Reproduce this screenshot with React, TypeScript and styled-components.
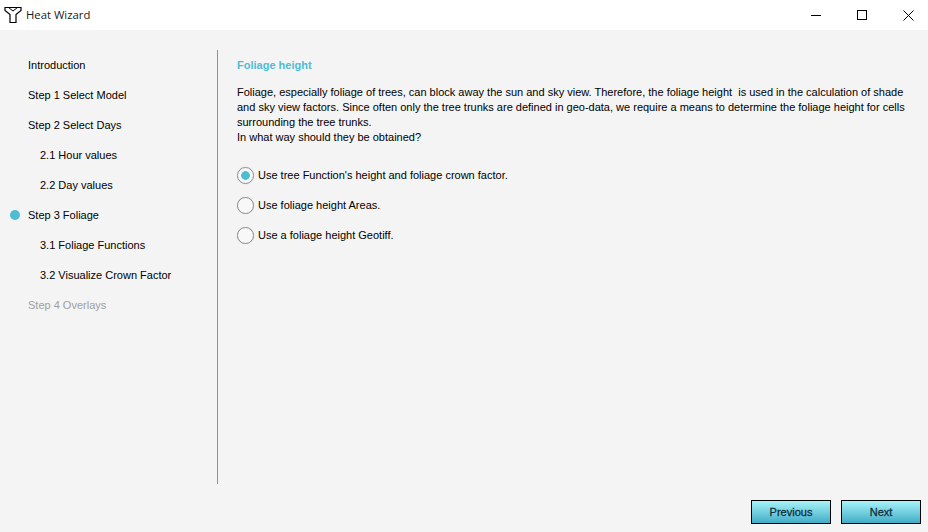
import React from "react";
import styled, { createGlobalStyle } from "styled-components";

const steps = [
  { label: "Introduction" },
  { label: "Step 1 Select Model" },
  { label: "Step 2 Select Days" },
  { label: "2.1 Hour values", sub: true },
  { label: "2.2 Day values", sub: true },
  { label: "Step 3 Foliage", active: true },
  { label: "3.1 Foliage Functions", sub: true },
  { label: "3.2 Visualize Crown Factor", sub: true },
  { label: "Step 4 Overlays", disabled: true },
];

const options = [
  { label: "Use tree Function's height and foliage crown factor.", checked: true },
  { label: "Use foliage height Areas." },
  { label: "Use a foliage height Geotiff." },
];

export default function App() {
  return (
    <>
      <GlobalStyle />
      <SWindow>
        <STitleBar>
          <SLogo viewBox="0 0 18 18" width="18" height="18">
            <path
              d="M1 1.5 H17 V4.5 L12 8.5 V16.5 H6 V8.5 L1 4.5 Z"
              fill="#fff"
              stroke="#000"
              strokeWidth="1.2"
            />
            <path d="M4.5 1.5 L9 5 L13.5 1.5" fill="none" stroke="#000" strokeWidth="1" />
          </SLogo>
          <STitle>Heat Wizard</STitle>
          <SWindowButtons>
            <SWindowButton>
              <svg width="10" height="10" viewBox="0 0 10 10">
                <path d="M0 5.5 H10" stroke="#000" strokeWidth="1" />
              </svg>
            </SWindowButton>
            <SWindowButton>
              <svg width="10" height="10" viewBox="0 0 10 10">
                <rect x="0.5" y="0.5" width="9" height="9" fill="none" stroke="#000" strokeWidth="1" />
              </svg>
            </SWindowButton>
            <SWindowButton>
              <svg width="11" height="11" viewBox="0 0 11 11">
                <path d="M0.5 0.5 L10.5 10.5 M10.5 0.5 L0.5 10.5" stroke="#000" strokeWidth="1" />
              </svg>
            </SWindowButton>
          </SWindowButtons>
        </STitleBar>
        <SBody>
          <SSidebar>
            {steps.map((step) => (
              <SStep key={step.label} $sub={step.sub} $disabled={step.disabled}>
                {step.active && <SStepDot />}
                {step.label}
              </SStep>
            ))}
          </SSidebar>
          <SContent>
            <SHeading>Foliage height</SHeading>
            <SParagraph>
              Foliage, especially foliage of trees, can block away the sun and sky view. Therefore, the foliage height&nbsp; is used in the calculation of shade
              <br />
              and sky view factors. Since often only the tree trunks are defined in geo-data, we require a means to determine the foliage height for cells
              <br />
              surrounding the tree trunks.
              <br />
              In what way should they be obtained?
            </SParagraph>
            <SOptions>
              {options.map((option) => (
                <SOption key={option.label}>
                  <SRadio $checked={option.checked} />
                  {option.label}
                </SOption>
              ))}
            </SOptions>
          </SContent>
        </SBody>
        <SFooter>
          <SButton>Previous</SButton>
          <SButton>Next</SButton>
        </SFooter>
      </SWindow>
    </>
  );
}

const GlobalStyle = createGlobalStyle`
  html, body {
    margin: 0;
    padding: 0;
    background: #f4f4f4;
  }
`;

const SWindow = styled.div`
  width: 928px;
  height: 532px;
  display: flex;
  flex-direction: column;
  overflow: hidden;
  background: #f4f4f4;
  color: #000;
  font-family: "Liberation Sans", Arial, sans-serif;
  font-size: 11px;
`;

const STitleBar = styled.div`
  height: 30px;
  flex: none;
  display: flex;
  align-items: center;
  padding-left: 4px;
  background: #fff;
`;

const SLogo = styled.svg`
  flex: none;
  margin-right: 4px;
`;

const STitle = styled.div`
  font-family: "Open Sans", sans-serif;
  font-size: 11.3px;
  color: #1a1a1a;
  margin-bottom: 1px;
`;

const SWindowButtons = styled.div`
  display: flex;
  margin-left: auto;
  margin-right: -3px;
  height: 100%;
`;

const SWindowButton = styled.div`
  width: 46px;
  display: flex;
  align-items: center;
  justify-content: center;
`;

const SBody = styled.div`
  flex: none;
  height: 434px;
  margin-top: 20px;
  display: flex;
`;

const SSidebar = styled.div`
  width: 218px;
  flex: none;
  box-sizing: border-box;
  border-right: 1px solid #45adc2;
`;

const SStep = styled.div<{ $sub?: boolean; $disabled?: boolean }>`
  position: relative;
  height: 30px;
  line-height: 30px;
  padding-left: ${(p) => (p.$sub ? "40px" : "28px")};
  color: ${(p) => (p.$disabled ? "#a0a0a0" : "#000")};
`;

const SStepDot = styled.span`
  position: absolute;
  left: 10px;
  top: 10px;
  width: 10px;
  height: 10px;
  border-radius: 50%;
  background: #4fbcd6;
`;

const SContent = styled.div`
  flex: 1;
  padding-left: 19px;
`;

const SHeading = styled.div`
  margin-top: 8px;
  line-height: 14px;
  font-weight: bold;
  color: #4fbcd6;
`;

const SParagraph = styled.p`
  margin: 13px 0 0;
  line-height: 15px;
  white-space: nowrap;
`;

const SOptions = styled.div`
  margin-top: 15px;
`;

const SOption = styled.div`
  height: 30px;
  display: flex;
  align-items: center;
  gap: 4px;
`;

const SRadio = styled.span<{ $checked?: boolean }>`
  width: 17px;
  height: 17px;
  box-sizing: border-box;
  border-radius: 50%;
  border: 1.5px solid #8f8f8f;
  box-shadow: 0 0 1px #c4c4c4;
  background: ${(p) =>
    p.$checked
      ? "radial-gradient(circle, #4fbcd6 0 4px, #f8f8f8 4.6px)"
      : "#f8f8f8"};
`;

const SFooter = styled.div`
  flex: 1;
  display: flex;
  justify-content: flex-end;
  align-items: flex-start;
  gap: 10px;
  padding: 16px 7px 0 0;
`;

const SButton = styled.button`
  width: 80px;
  height: 24px;
  padding: 0;
  border: 1px solid #000;
  border-radius: 0;
  background: linear-gradient(#a6f3f8, #42adc8);
  color: #10303a;
  font-family: "Liberation Sans", Arial, sans-serif;
  font-size: 11px;
  -webkit-text-stroke: 0.3px #10303a;
`;
